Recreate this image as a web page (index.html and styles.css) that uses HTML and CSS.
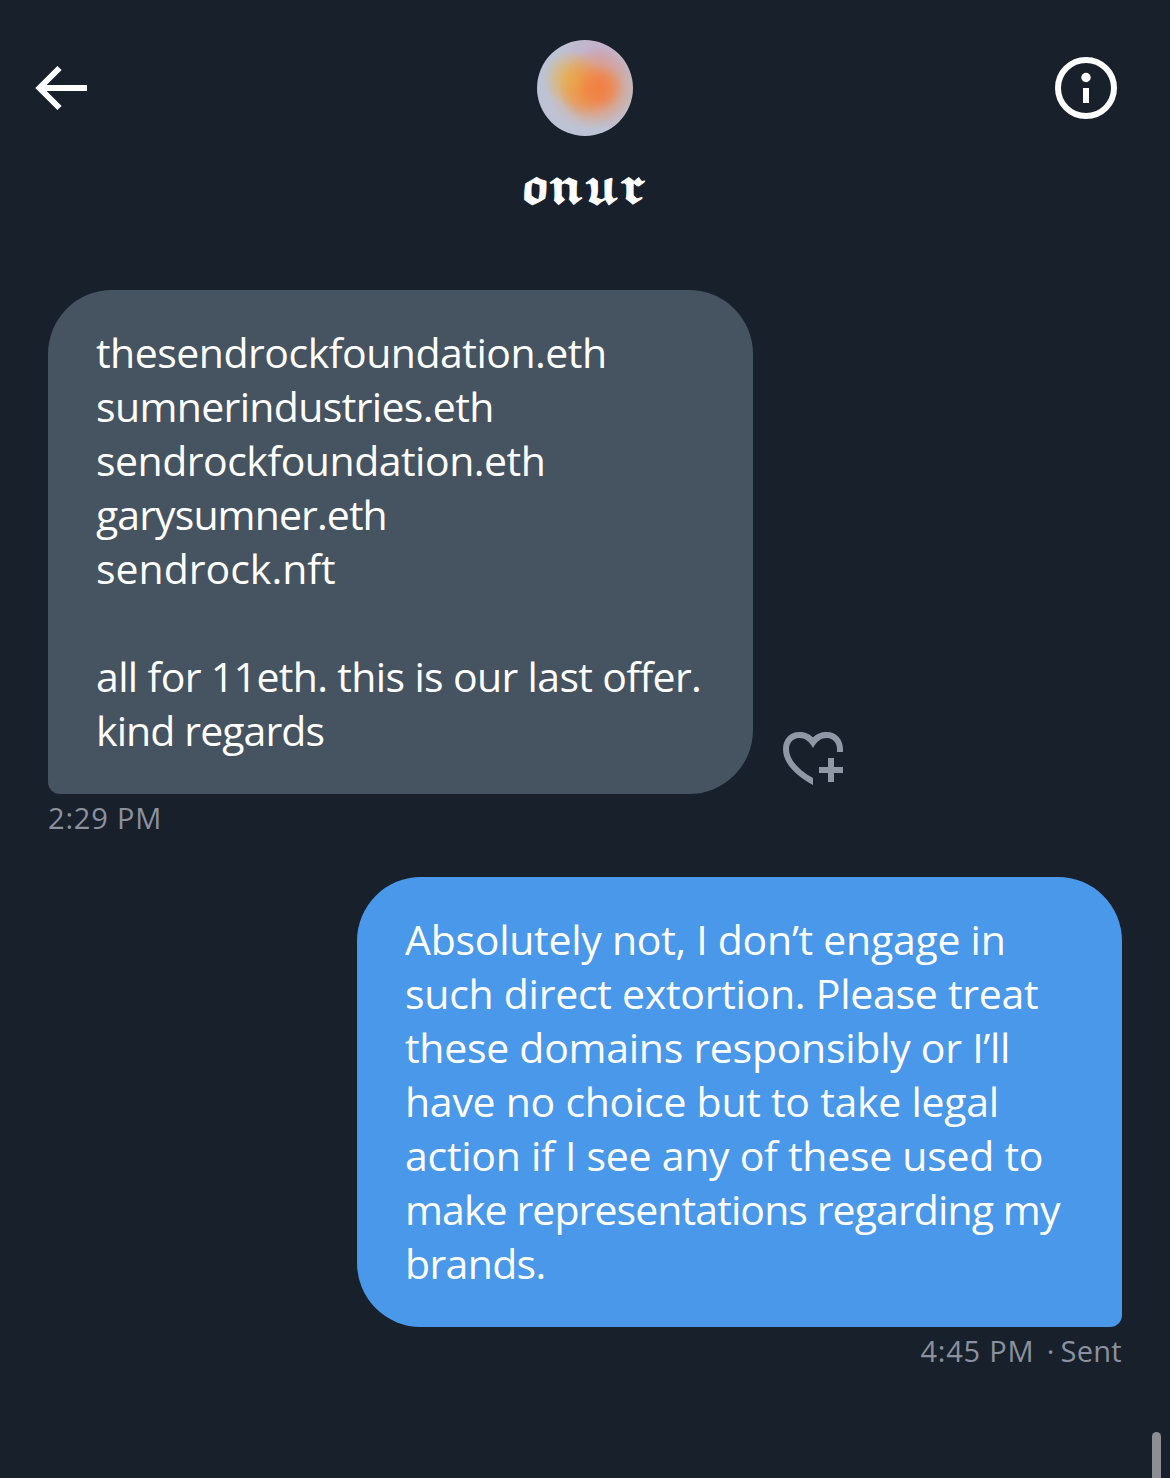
FILE: index.html
```
<!DOCTYPE html>
<html lang="en">

<head>
    <title>Messages</title>
    <meta charset="UTF-8">
    <meta name="viewport" content="width=device-width, initial-scale=1">
    <link rel="stylesheet" href="styles.css">
</head>

<body>
    <header class="header">
        <svg class="back" viewBox="0 0 54 46">
            <path d="M25.500 3L5.500 23l20 20M5 23h48" />
        </svg>
        <div class="user">
            <div class="avatar"></div>
            <h1 class="name">𝖔𝖓𝖚𝖗</h1>
        </div>
        <svg class="info" viewBox="0 0 62 62">
            <circle class="ring" cx="31" cy="31" r="28" />
            <circle cx="31" cy="20.500" r="4.700" />
            <rect x="28" y="31" width="6" height="15" />
        </svg>
    </header>
    <main class="chat">
        <div class="row">
            <p class="bubble received">
                <span class="line">thesendrockfoundation.eth</span>
                <span class="line medium">sumnerindustries.eth</span>
                <span class="line">sendrockfoundation.eth</span>
                <span class="line tight">garysumner.eth</span>
                <span class="line loose">sendrock.nft</span>
                <span class="line"></span>
                <span class="line medium">all for 11eth. this is our last offer.</span>
                <span class="line tight">kind regards</span>
            </p>
            <svg class="react" viewBox="0 0 60 54">
                <path d="M30 53C12 43 0 31 0 17 0 7 7 0 16 0c6 0 11 2 14 5.500C33 2 38 0 44 0c9 0 16 7 16 17v3h-6v-3c0-6-4-11-10-11-6 0-10 3-14 10-4-7-8-10-14-10C10 6 6 11 6 17c0 10 8 20 24 29z" />
                <path d="M45 26h6v9h9v6h-9v9h-6v-9h-9v-6h9z" />
            </svg>
        </div>
        <p class="time">2:29 PM</p>
        <div class="row row-right">
            <p class="bubble sent">
                <span class="line">Absolutely not, I don’t engage in</span>
                <span class="line">such direct extortion. Please treat</span>
                <span class="line">these domains responsibly or I’ll</span>
                <span class="line">have no choice but to take legal</span>
                <span class="line">action if I see any of these used to</span>
                <span class="line tight">make representations regarding my</span>
                <span class="line medium">brands.</span>
            </p>
        </div>
        <p class="time time-right">4:45 PM <span class="status">· Sent</span></p>
    </main>
    <div class="scrollbar"></div>
</body>

</html>
```

FILE: styles.css
```
* {
    box-sizing: border-box;
}

body {
    margin: 0;
    height: 1478px;
    position: relative;
    overflow: hidden;
    background: #18202b;
    color: #fff;
    font-family: "Open Sans", sans-serif;
}

p,
h1 {
    margin: 0;
}

svg {
    display: block;
    flex: none;
}

.header {
    display: flex;
    justify-content: space-between;
    height: 290px;
    padding: 40px 53px 0 34px;
}

.back {
    width: 54px;
    height: 46px;
    margin-top: 25px;
    fill: none;
    stroke: #fff;
    stroke-width: 6;
}

.user {
    display: flex;
    flex-direction: column;
    align-items: center;
    width: 200px;
    margin-left: 27px;
}

.avatar {
    width: 96px;
    height: 96px;
    border-radius: 50%;
    background:
        radial-gradient(circle at 66% 50%, #f27f43 0, rgba(242, 127, 67, .8) 14%, rgba(242, 127, 67, .35) 30%, rgba(242, 127, 67, 0) 52%),
        radial-gradient(circle at 36% 40%, rgba(230, 182, 80, .9) 0, rgba(232, 178, 76, .6) 14%, rgba(234, 178, 72, 0) 34%),
        radial-gradient(circle at 50% 52%, #ee9844 0, rgba(236, 155, 80, .75) 22%, rgba(225, 170, 130, .3) 40%, rgba(215, 180, 160, 0) 56%),
        radial-gradient(circle at 65% 15%, #c5acc8 0, rgba(197, 172, 200, 0) 40%),
        #bdc3d4;
}

.name {
    margin-top: 26px;
    padding-right: 4px;
    font-family: "DejaVu Math TeX Gyre", "DejaVu Sans", serif;
    font-size: 46px;
    font-weight: normal;
    line-height: 56px;
    letter-spacing: -3px;
    white-space: nowrap;
    -webkit-text-stroke: 1px #fff;
}

.info {
    width: 62px;
    height: 62px;
    margin-top: 17px;
    fill: #fff;
}

.ring {
    fill: none;
    stroke: #fff;
    stroke-width: 6;
}

.chat {
    padding: 0 48px;
}

.row {
    display: flex;
    align-items: flex-end;
}

.row-right {
    justify-content: flex-end;
}

.bubble {
    padding: 35px 48px 37px;
    font-size: 41px;
    line-height: 54px;
}

.received {
    width: 705px;
    background: #465361;
    border-radius: 64px 64px 64px 12px;
    letter-spacing: -.5px;
}

.sent {
    width: 765px;
    background: #4a98e9;
    border-radius: 64px 64px 12px 64px;
    letter-spacing: -.27px;
}

.line {
    display: block;
    height: 54px;
    white-space: nowrap;
}

.medium {
    letter-spacing: -.65px;
}

.tight {
    letter-spacing: -.9px;
}

.loose {
    letter-spacing: 0;
}

.react {
    width: 60px;
    height: 54px;
    margin: 0 0 8px 30px;
    fill: #9097a5;
}

.time {
    height: 83px;
    padding-top: 4px;
    color: #8b919f;
    font-size: 29px;
    line-height: 40px;
    letter-spacing: .8px;
}

.time-right {
    text-align: right;
}

.status {
    margin-left: 4px;
    letter-spacing: .3px;
    word-spacing: -2px;
}

.scrollbar {
    position: absolute;
    right: 9px;
    bottom: -20px;
    width: 9px;
    height: 66px;
    border-radius: 5px;
    background: #8c8e93;
}
```
